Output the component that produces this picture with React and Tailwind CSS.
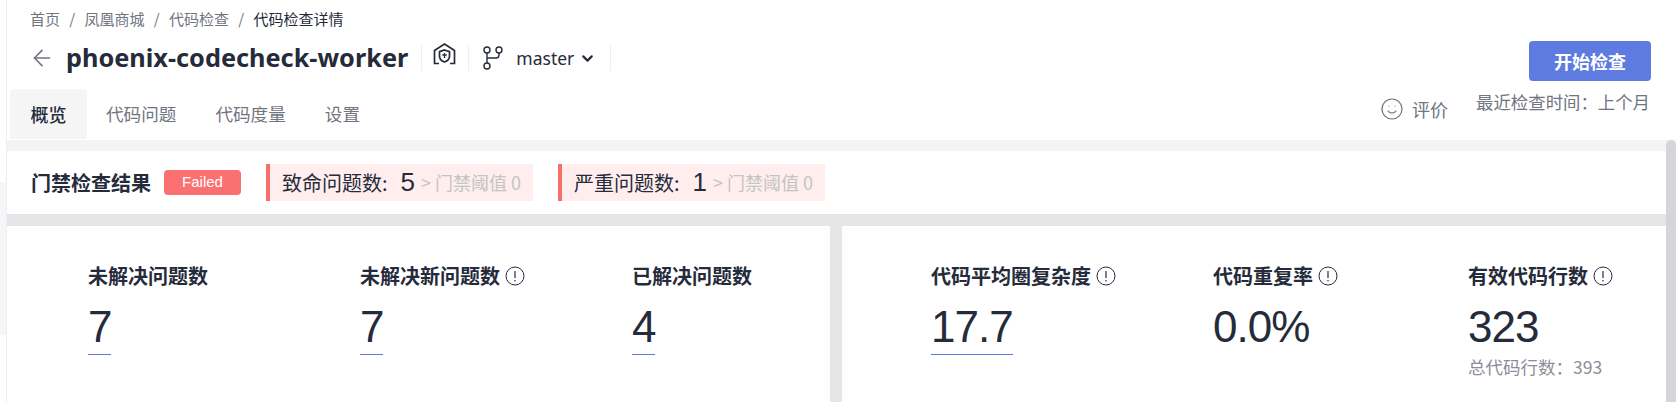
import React from 'react';
import { ArrowLeft, ChevronDown, Smile } from 'lucide-react';

const cjk = '"Noto Sans CJK SC", "Liberation Sans", sans-serif';

const crumbs = ['首页', '凤凰商城', '代码检查'];
const tabs = ['代码问题', '代码度量', '设置'];
const colon = '\uFF1A'; // full width colon

const InfoIcon = () => (
  <svg width="20" height="20" viewBox="0 0 20 20" fill="none" className="ml-[5px] shrink-0">
    <circle cx="10" cy="10" r="9" stroke="#252b3a" strokeWidth="1" />
    <path d="M10 5v7M10 14v1.400" stroke="#252b3a" strokeWidth="1.200" />
  </svg>
);

const RepoIcon = () => (
  <svg width="23" height="22" viewBox="0 0 23 22" fill="none" stroke="#252b3a" strokeWidth="1.700" className="mb-[8px]">
    <path d="M6 20.500H1.500V7.500L11.500 1l10 6.500v13H17" />
    <path d="M11.500 7l5 1.700v4.500c0 3-2.200 4.800-5 5.800-2.800-1-5-2.800-5-5.800V8.700z" />
    <path d="M11.500 10v5M9.300 12h4.400" strokeWidth="1.300" />
  </svg>
);

const BranchIcon = () => (
  <svg width="20" height="24" viewBox="0 0 20 24" fill="none" stroke="#252b3a" strokeWidth="1.400">
    <circle cx="4" cy="4" r="3" />
    <circle cx="16" cy="4" r="3" />
    <circle cx="4" cy="20" r="3" />
    <path d="M4 7v10M16 7v2c0 2-1 3-3 3H4" />
  </svg>
);

const Metric = ({ label, value, info, underline, sub, className }) => (
  <div className={className}>
    <div className="flex items-center h-[28px] text-[20px] font-bold leading-[28px] text-[#252b3a]">
      {label}
      {info && <InfoIcon />}
    </div>
    <div className="mt-[13px] w-fit">
      <div
        className="text-[44px] leading-[47px] tracking-[-1px] text-[#252b3a]"
        style={{ fontFamily: '"Liberation Sans", sans-serif' }}
      >
        {value}
      </div>
      {underline && <div className="mt-[4px] h-px bg-[#5e7ce0]" />}
    </div>
    {sub && <div className="mt-[5px] text-[17.5px] leading-[24px] text-[#8a8e99]">{sub}</div>}
  </div>
);

const GateItem = ({ label, count }) => (
  <div className="flex items-center h-[37px] w-[267px] border-l-4 border-[#f66f6a] bg-[#ffeeed] pl-[12px] text-[20px] text-[#252b3a]">
    <span>{label}:</span>
    <span className="ml-[13px] text-[26px] tracking-[-1px]" style={{ fontFamily: '"Liberation Sans", sans-serif' }}>
      {count}
    </span>
    <span className="ml-[7px] text-[18px] text-[#c4c4c4]">&gt; 门禁阈值 0</span>
  </div>
);

export default function App() {
  return (
    <div className="h-[402px] w-full overflow-hidden bg-white flex" style={{ fontFamily: cjk }}>
      {/* sliver of the side nav on the left */}
      <div className="w-[7px] shrink-0 border-r border-[#eeeff1] pt-[182px]">
        <div className="h-[153px] bg-[#f6f6f8]" />
      </div>

      <div className="flex-1 min-w-0 flex flex-col">
        <div className="h-[140px] shrink-0 flex justify-between">
          <div>
            <div className="flex items-center pl-[23px] pt-[9px] h-[30px] text-[15px] text-[#71757f]">
              {crumbs.map((c) => (
                <span key={c} className="flex items-center">
                  {c}
                  <span className="mx-[9.3px]">/</span>
                </span>
              ))}
              <span className="text-[#252b3a]">代码检查详情</span>
            </div>

            <div className="flex items-center pl-[22px] mt-[8px] h-[40px]">
              <ArrowLeft size={26} strokeWidth={1.5} className="text-[#71757f]" />
              <span
                className="ml-[11px] text-[25.3px] font-bold text-[#252b3a]"
                style={{ fontFamily: '"Noto Sans", sans-serif' }}
              >
                phoenix-codecheck-worker
              </span>
              <div className="ml-[13px] flex items-center h-[26px] border-l border-[#eeeff1] pl-[11px] pr-[12px]">
                <RepoIcon />
              </div>
              <div className="flex items-center h-[26px] border-l border-r border-[#eeeff1] pl-[14px] pr-[14px]">
                <BranchIcon />
                <span className="ml-[13px] text-[17.5px] text-[#252b3a]" style={{ fontFamily: '"Noto Sans", sans-serif' }}>
                  master
                </span>
                <ChevronDown size={17} strokeWidth={3} className="ml-[5px] text-[#252b3a]" />
              </div>
            </div>

            <div className="ml-[3px] mt-[12px] flex h-[50px] items-center pb-[2px] text-[17.6px] text-[#71757f]">
              <div className="flex h-[50px] w-[77px] items-center justify-center rounded-t-[4px] bg-[#f5f5f6] text-[18px] text-[#252b3a] font-medium">
                概览
              </div>
              {tabs.map((t, i) => (
                <div key={t} className={i === 0 ? 'ml-[19px]' : 'ml-[39px]'}>{t}</div>
              ))}
            </div>
          </div>

          <div className="flex flex-col items-end pr-[25px] pt-[41px]">
            <button className="h-[40px] w-[122px] rounded-[4px] bg-[#5e7ce0] text-[18px] font-bold text-white">
              开始检查
            </button>
            <div className="mt-[9px] flex items-start pr-px text-[#71757f]">
              <div className="mt-[7px] flex items-center text-[18px] leading-[24px]">
                <Smile size={24} strokeWidth={1.2} />
                <span className="ml-[8px]">评价</span>
              </div>
              <div className="ml-[28px] text-[17.4px] leading-[24px]">{`最近检查时间${colon}上个月`}</div>
            </div>
          </div>
        </div>

        <div className="flex-1 flex min-h-0 bg-[#f4f4f6]">
          <div className="flex-1 min-w-0 pt-[11px] flex flex-col">
            <div className="h-[63px] shrink-0 bg-white flex items-center pl-[24px]">
              <span className="w-[133px] text-[20px] font-bold text-[#252b3a]">门禁检查结果</span>
              <span
                className="flex h-[25px] w-[77px] items-center justify-center rounded-[4px] bg-[#fb7171] text-[15px] text-white"
                style={{ fontFamily: '"Liberation Sans", sans-serif' }}
              >
                Failed
              </span>
              <div className="ml-[25px] flex gap-[25px]">
                <GateItem label="致命问题数" count="5" />
                <GateItem label="严重问题数" count="1" />
              </div>
            </div>
            <div className="flex flex-1 gap-[12px] bg-[#e6e6e9] pt-[12px]">
              <div className="w-[823px] bg-white flex pl-[81px] pt-[36px]">
                <Metric className="w-[272px]" label="未解决问题数" value="7" underline />
                <Metric className="w-[272px]" label="未解决新问题数" value="7" underline info />
                <Metric label="已解决问题数" value="4" underline />
              </div>
              <div className="flex-1 bg-white flex pl-[89px] pt-[36px]">
                <Metric className="w-[282px]" label="代码平均圈复杂度" value="17.7" underline info />
                <Metric className="w-[255px]" label="代码重复率" value="0.0%" info />
                <Metric label="有效代码行数" value="323" info sub={`总代码行数${colon}393`} />
              </div>
            </div>
          </div>
          <div className="w-[10px] shrink-0 rounded-t-[5px] bg-[#d4d5d8]" />
        </div>
      </div>
    </div>
  );
}
